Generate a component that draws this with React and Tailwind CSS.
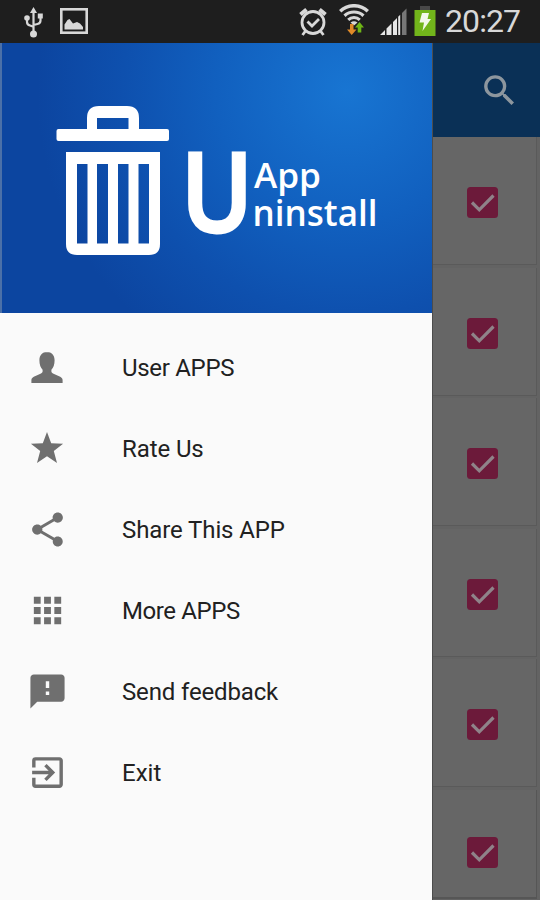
import { MdApps, MdExitToApp, MdFeedback, MdSearch, MdShare } from "react-icons/md";

const PersonIcon = () => (
  <svg viewBox="0 0 40 40" className="w-10 h-10" fill="currentColor">
    <path d="M20 4c-4.600 0-7.600 3.200-7.600 8.200 0 4.300 1.300 7.600 3.200 9.500v1.600c0 1-.6 1.600-1.600 2.100l-7.200 3.400c-1.500.8-2.400 1.900-2.400 3.400v2.800h31.200v-2.800c0-1.500-.9-2.600-2.400-3.400l-7.200-3.400c-1-.5-1.600-1.100-1.600-2.100v-1.600c1.900-1.900 3.200-5.200 3.200-9.500 0-5-3-8.200-7.600-8.200z" />
  </svg>
);

const StarIcon = () => (
  <svg viewBox="0 0 40 40" className="w-10 h-10" fill="currentColor">
    <path d="M20 3l4.200 11.200 11.900.5-9.300 7.400 3.200 11.900-10-6.800-10 6.800 3.200-11.900-9.300-7.400 11.900-.5z" />
  </svg>
);

const menuItems = [
  { label: "User APPS", icon: <PersonIcon />, spacing: "tracking-[-0.3px]" },
  { label: "Rate Us", icon: <StarIcon />, spacing: "tracking-[-0.1px]" },
  { label: "Share This APP", icon: <MdShare size={41} />, spacing: "tracking-[-0.1px]" },
  { label: "More APPS", icon: <MdApps size={41} />, spacing: "tracking-[-0.4px]" },
  { label: "Send feedback", icon: <MdFeedback size={41} />, spacing: "tracking-[-0.15px]" },
  { label: "Exit", icon: <MdExitToApp size={41} />, spacing: "tracking-normal" },
];

function StatusBar() {
  return (
    <header className="h-[43px] shrink-0 bg-[#1e1e1e] flex items-center justify-between text-[#d8d8d8]">
      <div className="flex items-center pl-[23px]">
        {/* USB */}
        <svg width="21" height="32" viewBox="0 0 21 32" fill="none" stroke="currentColor" strokeWidth="2.200">
          <path d="M10.500 27V5M4 12v4c0 2 1 3 3 3.500l3.500 1.200M17.500 9v5.500c0 2-1 3-3 3.500l-4 1" />
          <path d="M10.500 1l3.500 6H7z" fill="currentColor" stroke="none" />
          <circle cx="10.500" cy="28" r="3.500" fill="currentColor" stroke="none" />
          <circle cx="4" cy="12" r="2.800" fill="currentColor" stroke="none" />
          <rect x="14.800" y="7.500" width="5" height="5" fill="currentColor" stroke="none" />
        </svg>
        {/* Gallery */}
        <svg className="ml-4 -mt-0.5" width="28" height="26" viewBox="0 0 28 26">
          <rect x="1.300" y="1.300" width="25.400" height="23.400" fill="none" stroke="currentColor" strokeWidth="2.600" />
          <path d="M4.500 21.500v-5l3-4.500 2-1 3.500 4.500 4-1.500 3 1.500 3 3.500v2.500z" fill="currentColor" />
        </svg>
      </div>

      <div className="flex items-center pr-5">
        {/* Alarm */}
        <svg width="28" height="30" viewBox="0 0 28 30" fill="none" stroke="currentColor" strokeWidth="2.800">
          <circle cx="14" cy="15.500" r="11" />
          <path d="M8.500 14.500l4.500 4.500 7-7" />
          <path d="M1.500 7.500l6-5M26.500 7.500l-6-5" strokeWidth="4" />
          <path d="M6.500 24l-3 4M21.500 24l3 4" />
        </svg>
        {/* Wifi with up / down arrows */}
        <svg className="ml-3 -mt-[3px]" width="30" height="32" viewBox="0 0 30 32" fill="none" stroke="currentColor">
          <path d="M1.200 7.200a20 20 0 0 1 27.600 0" strokeWidth="3.400" />
          <path d="M5.500 11.700a14 14 0 0 1 19 0" strokeWidth="3.200" />
          <path d="M9.200 15.800a8.500 8.500 0 0 1 11.600 0" strokeWidth="3" />
          <path d="M11.500 18.500q3.500-2.500 7 0L15 21.500z" fill="currentColor" stroke="none" />
          <path d="M11 20h3.500v5.500h3l-4.800 5.500-4.700-5.500h3z" fill="#e08a28" stroke="none" />
          <path d="M20.500 18l4.500 5.500h-2.700v5h-3.600v-5H16z" fill="#6fb516" stroke="none" />
        </svg>
        {/* Signal */}
        <svg className="ml-2.5" width="28" height="28" viewBox="0 0 28 28">
          <path d="M1 27l5-5v5zM7.500 27v-6.500l5-5V27zM14 27V14l4-4v17z" fill="#e6e6e6" />
          <path d="M19.200 27V8.800l2-2V27z" fill="#e6e6e6" />
          <path d="M23 27V5l4.500-4.500V27z" fill="#777" />
        </svg>
        {/* Battery */}
        <svg className="ml-[7px] -mt-0.5" width="22" height="30" viewBox="0 0 22 30">
          <path d="M6 0h10v4H6z" fill="#484848" />
          <path d="M.5 4h21v26H.5z" fill="#72b51b" />
          <path d="M8 7h7l-1.500 6H17L8.500 25l1.500-8.500H5.500z" fill="#f3f8ea" />
        </svg>
        <span className="ml-[9px] w-[75px] font-['Roboto'] text-[32px] leading-[43px] tracking-[-0.9px] whitespace-nowrap">20:27</span>
      </div>
    </header>
  );
}

function DrawerHeader() {
  return (
    <div className="h-[270px] border-l-2 border-[#4b70a8] bg-[radial-gradient(circle_at_345px_48px,#1875d2_0px,#1160bf_130px,#0e50ae_225px,#0c45a0_310px)]">
      <svg width="430" height="270" viewBox="2 43 430 270" fill="#fff">
        {/* Trash can */}
        <path d="M87 131V118q0-12 12-12h28q12 0 12 12v13h-10.500V118H97v13z" />
        <rect x="56.500" y="129" width="112.500" height="12" rx="2" />
        <path
          fillRule="evenodd"
          d="M66 152h94v92q0 11-11 11H77q-11 0-11-11zM77 164v79.500h10.500V164zM97 164v79.500h11V164zM118 164v79.500h10.500V164zM138.500 164v79.500H149V164z"
        />
        <text x="181" y="232" fontFamily="Open Sans, sans-serif" fontWeight="600" fontSize="110" textLength="72" lengthAdjust="spacingAndGlyphs" stroke="#fff" strokeWidth="3">U</text>
        <text x="254" y="188" fontFamily="Open Sans, sans-serif" fontWeight="600" fontSize="35" textLength="67" lengthAdjust="spacingAndGlyphs">App</text>
        <text x="252.500" y="226" fontFamily="Open Sans, sans-serif" fontWeight="600" fontSize="36" textLength="125" lengthAdjust="spacingAndGlyphs">ninstall</text>
      </svg>
    </div>
  );
}

function Drawer() {
  return (
    <aside className="w-[432px] shrink-0 bg-[#fafafa]">
      <DrawerHeader />
      <nav className="pt-[14px]">
        {menuItems.map((item) => (
          <a key={item.label} className="flex items-center h-[81px] pl-[27px]">
            <span className="w-[95px] flex text-[#6f6f6f]">{item.icon}</span>
            <span className={`font-['Roboto'] text-[24px] text-[#212121] ${item.spacing}`}>{item.label}</span>
          </a>
        ))}
      </nav>
    </aside>
  );
}

function CheckBox() {
  return (
    <svg width="31" height="31" viewBox="0 0 31 31">
      <rect width="31" height="31" rx="3.500" fill="#6c1a3a" />
      <path d="M5 15.500l7.300 7.300L26.500 8.500" fill="none" stroke="#8f8389" strokeWidth="3.200" />
    </svg>
  );
}

// App list, dimmed while the drawer is open
function AppList() {
  return (
    <main className="flex-1 flex flex-col overflow-hidden bg-[#636363] border-l border-[#4c4c4c]">
      <div className="h-[94px] shrink-0 bg-[#0a3056] flex items-center justify-end pr-5">
        <MdSearch size={41} className="text-[#8d969e]" />
      </div>
      {[0, 1, 2, 3, 4].map((i) => (
        <div key={i} className="h-[130.5px] shrink-0 pr-[3px]">
          <div className="h-[128px] pl-[34px] pt-[4px] flex items-center bg-[#666] border-b border-r border-[#5a5a5a]">
            <CheckBox />
          </div>
        </div>
      ))}
      <div className="h-[109px] shrink-0 pl-[34px] mr-[3px] flex items-start pt-[47px] bg-[#666] border-b-2 border-r border-[#565656]">
        <CheckBox />
      </div>
    </main>
  );
}

export default function App() {
  return (
    <div className="w-[540px] h-[900px] flex flex-col overflow-hidden">
      <StatusBar />
      <div className="flex-1 flex min-h-0">
        <Drawer />
        <AppList />
      </div>
    </div>
  );
}
